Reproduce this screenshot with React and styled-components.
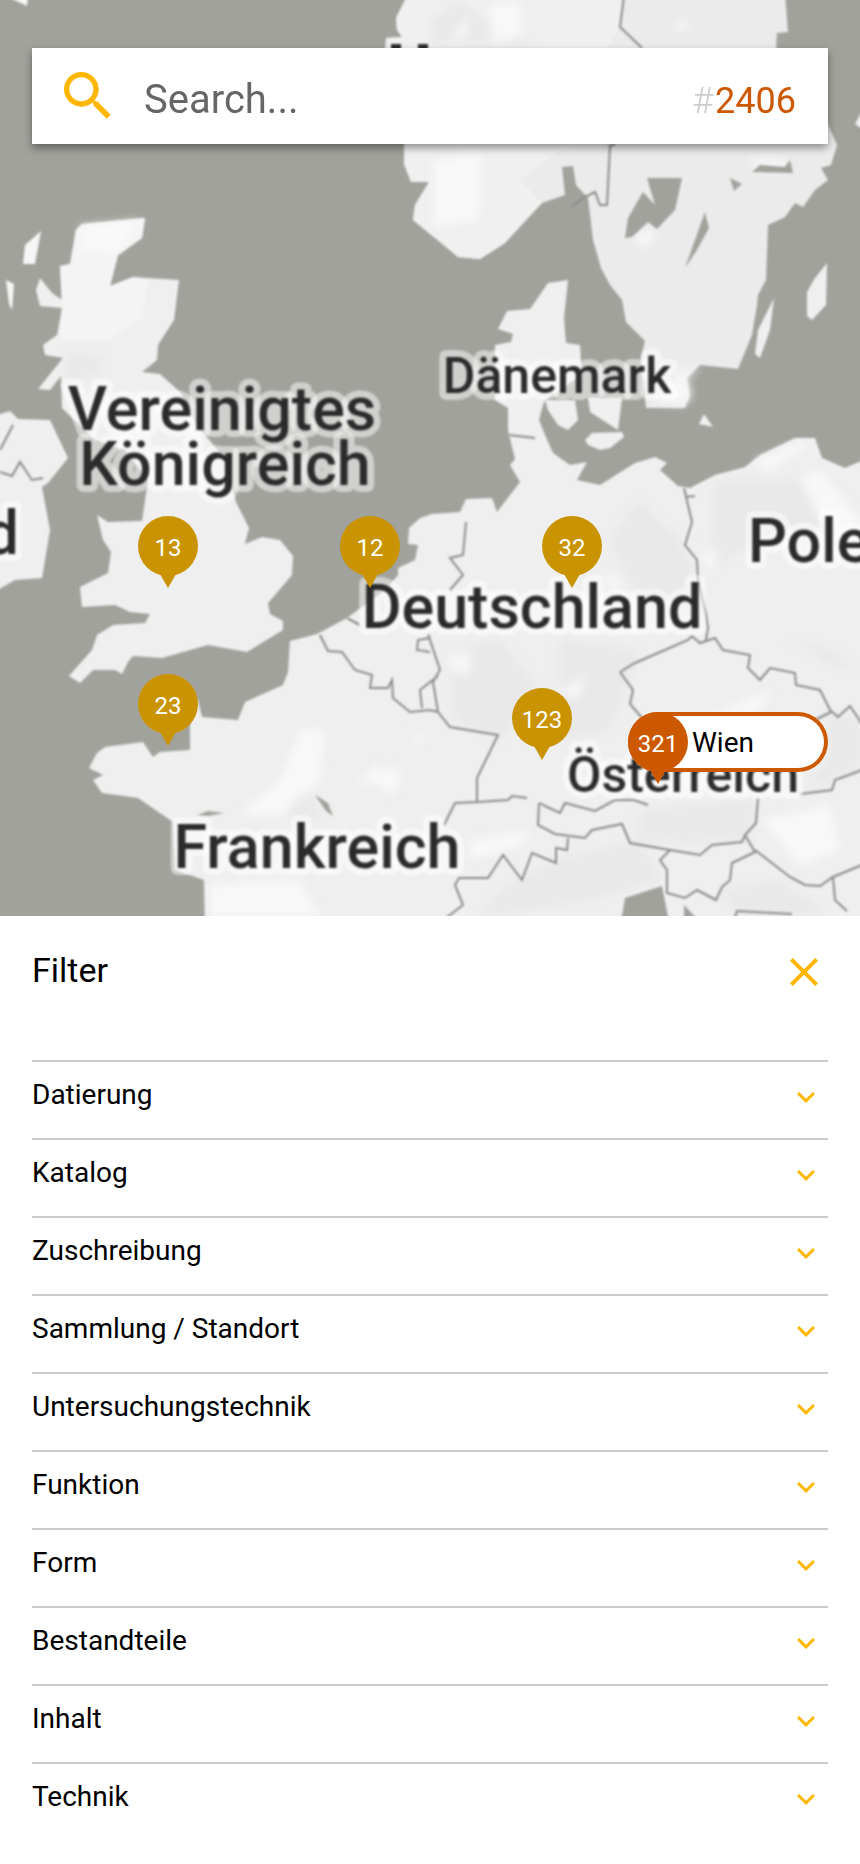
import React, { useState } from "react";
import styled, { createGlobalStyle, css } from "styled-components";

const color = {
  amber: "#ffb600",
  ochre: "#ca9302",
  orange: "#cc5800",
  sea: "#a1a29c",
  land: "#efefef",
  line: "#cccccc",
  label: "#2b2b2b",
};

const GlobalStyle = createGlobalStyle`
  *, *::before, *::after { box-sizing: border-box; }
  body {
    margin: 0;
    background: #fff;
    color: #000;
    font-family: Roboto, "Liberation Sans", sans-serif;
  }
`;

const Page = styled.main`
  padding-bottom: 24px;
`;

/* ---------- map ---------- */

const MapArea = styled.section`
  position: relative;
  aspect-ratio: 860 / 916;
  overflow: hidden;
  background: ${color.sea};
`;

const MapDrawing = styled.svg`
  display: block;
  width: 100%;
  height: 100%;
`;

const Terrain = styled.g`
  filter: blur(1px);
`;

const Relief = styled.g`
  filter: blur(4px);
`;

const MapLabel = styled.text`
  font-family: Roboto, "Liberation Sans", sans-serif;
  font-weight: 500;
  font-size: ${(p) => (p.$small ? 50 : 61)}px;
  text-anchor: ${(p) => p.$anchor || "middle"};
  fill: ${color.label};
  stroke: rgba(255, 255, 255, 0.5);
  stroke-width: 14px;
  stroke-linejoin: round;
  paint-order: stroke;
`;

const BORDERS = [
  "M624 -4L620 27L642 48M615 144L610 146L607 205L600 205L595 192L585 197L572 206",
  "M509 435L535 438M0 450L13 425M0 472L12 476L20 462L32 480L43 478",
  "M466 522L463 555L450 558L463 575L450 590",
  "M684 488L692 522L685 545L697 560L698 580L706 615L708 628L706 640",
  "M685 497L695 496",
  "M347 618L360 625M320 635L328 651L342 652L355 670L372 675L370 688L388 688L392 680L393 698L410 712L430 710",
  "M438 676L420 690L422 708M430 638L418 640L417 650L430 652",
  "M428 634L440 670L433 682L438 712L450 727L498 735L477 778L477 802L455 803L444 825M430 710L438 712",
  "M477 802L508 800L512 796L527 798",
  "M620 672L635 663L688 640L692 636L700 643L715 638L723 650L750 655L748 668L760 680L770 668L795 673L796 685L820 690L830 710L838 717L850 706L862 724",
  "M620 672L633 690L630 704L642 718L660 730M815 720L831 712",
  "M540 803L545 806L560 813L565 803L595 811L615 800L634 800L648 805",
  "M539 803L538 825L555 834L585 838L592 830L622 824L630 843L670 850L700 855L712 845L742 842L745 835L756 823L758 798",
  "M568 838L567 850L556 848L556 863L532 853L522 880L503 855L488 878L459 878L455 885L463 905L446 918",
  "M670 850L660 860L667 870L667 893L685 898L697 890L716 900L722 887L730 880L732 863L755 852L745 835",
  "M755 850L790 877L805 885L820 886L833 877L862 865M833 877L835 900L847 911",
  "M735 918L737 911L792 914M800 794L832 790L835 780L862 770",
];

const SHADE_DARK = [
  "M640 500L690 560L700 620L640 600L610 540Z",
  "M625 508L680 535L676 560Z",
  "M715 480L812 480L830 530L760 540L710 570Z",
  "M450 650L500 640L540 690L500 740L455 720Z",
  "M560 640L640 650L610 730L560 740Z",
  "M640 810L755 800L750 840L640 842Z",
  "M560 860L640 840L660 880L590 900L480 918L500 890Z",
  "M790 640L830 650L860 668L830 664Z",
  "M290 790L310 794L325 820L290 818Z",
  "M430 20L460 0L500 30L540 44L430 44Z",
  "M66 352L104 358L98 374L66 382Z",
  "M720 890L780 880L830 916L740 916Z",
  "M828 712L860 720L860 768L800 790L828 760Z",
];

const SHADE_LIGHT = [
  "M450 44L470 12L466 36Z",
  "M490 4L520 4L522 36L492 44Z",
  "M674 32L684 16L688 28Z",
  "M434 160L482 154L478 220L434 226Z",
  "M80 226L142 220L118 252L82 250Z",
  "M752 462L800 442L808 446L770 470Z",
  "M800 480L820 470L860 520L860 560L820 520Z",
  "M640 230L658 232L650 246L634 244Z",
  "M750 158L788 160L784 172L756 168Z",
  "M702 365L688 378L692 396L684 406L650 400L680 372Z",
  "M300 730L326 730L320 780L280 816L240 814L280 780Z",
  "M355 786L380 760L376 772L402 768L394 796L370 780Z",
  "M407 728L424 740L420 746Z",
  "M450 654L472 652L468 676L452 670Z",
  "M600 570L622 582L614 592Z",
  "M700 555L720 548L712 572Z",
  "M560 690L585 676L578 700Z",
  "M700 720L770 690L760 712Z",
  "M762 820L830 805L840 850L800 866Z",
  "M210 884L300 880L320 916L210 916Z",
  "M470 840L530 830L520 846L470 860Z",
];

function EuropeMap() {
  return (
    <MapDrawing viewBox="0 0 860 916" preserveAspectRatio="xMidYMid slice" role="img" aria-label="Karte von Mitteleuropa">
      <Terrain>
        <rect x="-20" y="-20" width="900" height="956" fill={color.sea} />
        {/* Scandinavia */}
        <path
          fill="#ebebeb"
          d="M408 -6L396 18L397 30L402 37L386 38L384 60L404 140L408 152L404 164L411 182L429 182L415 205L413 220L430 234L446 246L458 257L480 259L505 243L530 215L542 203L565 195L562 167L573 166L576 185L588 198L593 240L601 268L610 285L622 300L626 322L645 341L641 358L646 408L685 408L690 396L687 378L700 365L738 369L752 335L757 305L758 295L766 280L768 225L785 217L795 203L803 207L815 190L828 180L821 168L831 165L837 145L828 125L800 60L776 48L777 33L788 32L785 -6Z"
        />
        <path fill="#f0f0f0" d="M408 -6L396 18L397 30L402 37L386 38L404 140L404 164L411 182L429 182L415 205L413 220L458 257L480 259L505 243L542 203L520 180L560 150L606 146L600 60L620 27L624 -6Z" />
        {/* Danish mainland and continental Europe */}
        <path
          fill={color.land}
          d="M507 311L530 309L548 283L568 280L564 318L566 343L580 345L582 375L545 400L543 405L539 420L545 435L553 453L570 465L587 462L577 480L600 485L635 463L655 457L667 463L660 470L678 486L690 488L715 475L745 467L760 455L795 438L815 438L822 458L845 468L866 459L866 922L205 922L204 880L175 870L173 822L138 798L102 793L93 780L103 775L89 768L97 753L105 747L143 742L153 757L160 752L190 750L190 700L198 700L202 717L238 720L245 702L283 685L288 672L290 641L317 634L347 618L385 590L398 575L398 568L415 560L418 545L408 544L409 528L420 518L432 514L460 512L466 499L492 498L497 512L520 482L510 465L515 459L508 430L508 408L495 400L495 345L511 342L513 334L498 329Z"
        />
        {/* Danish islands and the Baltic */}
        <path
          fill={color.land}
          d="M545 400L575 400L578 420L568 430L558 425L548 410ZM588 398L622 398L618 430L590 412ZM585 440L592 433L622 432L624 437L610 448L600 450L588 445ZM704 414L713 427L699 424ZM774 298L770 330L760 358L755 354L758 330ZM827 263L826 305L812 320L807 316L807 292L815 278ZM864 108L855 124L864 130Z"
        />
        {/* Great Britain */}
        <path
          fill={color.land}
          d="M76 230L82 224L145 218L142 238L118 255L110 286L133 277L179 280L174 320L158 345L157 360L142 372L160 374L180 392L196 424L226 460L236 502L249 528L245 544L262 537L280 540L293 556L292 575L268 603L270 614L283 621L283 630L247 652L208 645L162 658L133 656L128 662L122 674L115 670L93 670L80 683L69 676L92 650L97 635L113 625L145 623L150 614L130 612L115 605L82 607L80 587L108 573L111 552L103 540L97 515L108 522L142 521L148 480L125 450L95 440L62 408L61 376L50 390L38 389L63 358L45 355L43 345L57 335L62 308L40 306L36 290L40 278L52 293L62 300L60 266L70 264Z"
        />
        <path fill="#f4f4f4" d="M76 230L82 224L145 218L142 238L118 255L110 286L133 277L148 280L142 318L110 340L60 340L62 308L60 266L70 264Z" />
        <path fill="#f6f6f6" d="M41 231L35 264L23 264L25 245ZM6 280L14 284L12 310L9 304ZM6 -4L28 -4L27 6Z" />
        {/* Ireland */}
        <path fill={color.land} d="M-6 416L10 411L18 419L50 420L68 458L48 483L42 487L50 530L42 578L15 580L-6 592Z" />
      </Terrain>
      <Relief>
        {SHADE_DARK.map((d) => (
          <path key={d} d={d} fill="#e7e7e7" opacity="0.8" />
        ))}
        {SHADE_LIGHT.map((d) => (
          <path key={d} d={d} fill="#fafafa" opacity="0.8" />
        ))}
      </Relief>
      <Terrain>
        {/* Lakes and inlets */}
        <path
          fill={color.sea}
          d="M647 178L682 178L675 210L657 229L648 222L632 237L625 238L628 218L643 192L655 205ZM705 212L709 228L697 250L685 268ZM752 172L760 165L785 167L790 160L793 173ZM730 178L742 184L734 191ZM625 898L662 886L669 922L621 922ZM684 905L700 922L684 922ZM197 815L208 811L224 813L208 816ZM315 795L328 803L333 816L326 811Z"
        />
        <path fill={color.label} d="M391 44h10v10h-10ZM418 44h10v10h-10Z" />
        <path d={BORDERS.join("")} fill="none" stroke="#8b8b88" strokeWidth="2" />
      </Terrain>
      <Terrain>
        <MapLabel $small x="557" y="393">Dänemark</MapLabel>
        <MapLabel x="222" y="430">Vereinigtes</MapLabel>
        <MapLabel x="225" y="485">Königreich</MapLabel>
        <MapLabel x="19" y="554" $anchor="end">Irland</MapLabel>
        <MapLabel x="748" y="562" $anchor="start">Polen</MapLabel>
        <MapLabel x="532" y="628">Deutschland</MapLabel>
        <MapLabel $small x="683" y="792">Österreich</MapLabel>
        <MapLabel x="317" y="868">Frankreich</MapLabel>
      </Terrain>
    </MapDrawing>
  );
}

const SearchBar = styled.form`
  position: absolute;
  top: 48px;
  left: 32px;
  right: 32px;
  display: flex;
  align-items: center;
  gap: 24px;
  height: 96px;
  padding: 0 32px 0 24px;
  background: #fff;
  box-shadow: 0 4px 8px rgba(0, 0, 0, 0.4);
`;

const SearchIcon = styled.svg`
  flex: none;
  width: 64px;
  height: 64px;
  fill: ${color.amber};
`;

const SearchFields = styled.div`
  flex: 1;
  min-width: 0;
  display: flex;
  align-items: baseline;
  padding-top: 8px;
`;

const SearchInput = styled.input`
  flex: 1;
  min-width: 0;
  padding: 0;
  border: 0;
  outline: 0;
  background: none;
  color: #000;
  font: inherit;
  font-size: 40px;
  line-height: 48px;

  &::placeholder {
    color: #666;
    opacity: 1;
  }
`;

const HitCount = styled.output`
  color: ${color.orange};
  font-size: 36px;
  line-height: 48px;
`;

const HashSign = styled.span`
  padding-right: 2px;
  color: ${color.line};
  font-weight: 300;
`;

const Pin = styled.button`
  position: absolute;
  left: ${(p) => `calc(100% * ${p.$x} / 860)`};
  top: ${(p) => `calc(100% * ${p.$y} / 916)`};
  display: flex;
  align-items: center;
  height: 60px;
  padding: 0;
  border: 0;
  border-radius: 30px;
  background: none;
  color: #000;
  font: inherit;
  font-size: 28px;
  cursor: pointer;

  ${(p) =>
    p.$open &&
    css`
      width: 200px;
      gap: 4px;
      background: #fff;
      box-shadow: inset 0 0 0 4px ${color.orange};
    `}
`;

const PinCount = styled.span`
  position: relative;
  display: grid;
  place-items: center;
  width: 60px;
  height: 60px;
  padding-top: 4px;
  border-radius: 50%;
  background: ${(p) => (p.$open ? color.orange : color.ochre)};
  color: #fff;
  font-size: 24px;
  font-weight: 400;

  &::after {
    content: "";
    position: absolute;
    top: 58px;
    left: 22px;
    border: solid transparent;
    border-width: 14px 8px 0;
    border-top-color: ${(p) => (p.$open ? color.orange : color.ochre)};
  }
`;

const PINS = [
  { x: 138, y: 516, count: 13 },
  { x: 340, y: 516, count: 12 },
  { x: 542, y: 516, count: 32 },
  { x: 138, y: 674, count: 23 },
  { x: 512, y: 688, count: 123 },
  { x: 628, y: 712, count: 321, place: "Wien" },
];

/* ---------- filter ---------- */

const FilterPanel = styled.section`
  padding: 32px 32px 0;
`;

const FilterHeader = styled.header`
  display: flex;
  align-items: flex-start;
  justify-content: space-between;
  padding-bottom: 64px;
`;

const FilterTitle = styled.h2`
  margin: 0;
  font-size: 34px;
  font-weight: 400;
  line-height: 44px;
`;

const CloseButton = styled.button`
  width: 48px;
  height: 48px;
  padding: 0;
  border: 0;
  background: none;
  cursor: pointer;
`;

const CloseIcon = styled.svg`
  display: block;
  width: 48px;
  height: 48px;
  fill: ${color.amber};
`;

const FilterList = styled.ul`
  margin: 0;
  padding: 0;
  list-style: none;
`;

const FilterItem = styled.li`
  border-top: 2px solid ${color.line};
`;

const FilterToggle = styled.button`
  display: flex;
  align-items: center;
  justify-content: space-between;
  width: 100%;
  height: 76px;
  padding: 0 4px 12px 0;
  border: 0;
  background: none;
  color: #000;
  font: inherit;
  font-size: 28px;
  text-align: left;
  cursor: pointer;
`;

const Chevron = styled.svg`
  flex: none;
  width: 36px;
  height: 36px;
  margin-top: 6px;
  fill: ${color.amber};
  transform: ${(p) => (p.$open ? "rotate(180deg)" : "none")};
`;

const FILTERS = [
  "Datierung",
  "Katalog",
  "Zuschreibung",
  "Sammlung / Standort",
  "Untersuchungstechnik",
  "Funktion",
  "Form",
  "Bestandteile",
  "Inhalt",
  "Technik",
];

export default function App() {
  const [openFilter, setOpenFilter] = useState(null);

  return (
    <>
      <GlobalStyle />
      <Page>
        <MapArea>
          <EuropeMap />
          {PINS.map((pin) => (
            <Pin key={pin.count} type="button" $x={pin.x} $y={pin.y} $open={Boolean(pin.place)}>
              <PinCount $open={Boolean(pin.place)}>{pin.count}</PinCount>
              {pin.place}
            </Pin>
          ))}
          <SearchBar role="search" onSubmit={(e) => e.preventDefault()}>
            <SearchIcon viewBox="0 0 24 24" aria-hidden="true">
              <path d="M15.5 14h-.79l-.28-.27C15.41 12.59 16 11.11 16 9.5 16 5.91 13.09 3 9.5 3S3 5.91 3 9.5 5.91 16 9.5 16c1.61 0 3.09-.59 4.23-1.57l.27.28v.79l5 4.99L20.49 19l-4.99-5zm-6 0C7.01 14 5 11.99 5 9.5S7.01 5 9.5 5 14 7.01 14 9.5 11.99 14 9.5 14z" />
            </SearchIcon>
            <SearchFields>
              <SearchInput id="search" type="text" aria-label="Search" placeholder="Search..." />
              <HitCount htmlFor="search">
                <HashSign>#</HashSign>2406
              </HitCount>
            </SearchFields>
          </SearchBar>
        </MapArea>
        <FilterPanel>
          <FilterHeader>
            <FilterTitle>Filter</FilterTitle>
            <CloseButton type="button" aria-label="Filter schließen">
              <CloseIcon viewBox="0 0 24 24" aria-hidden="true">
                <path d="M19 6.41L17.59 5 12 10.59 6.41 5 5 6.41 10.59 12 5 17.59 6.41 19 12 13.41 17.59 19 19 17.59 13.41 12z" />
              </CloseIcon>
            </CloseButton>
          </FilterHeader>
          <FilterList>
            {FILTERS.map((name) => {
              const open = openFilter === name;
              return (
                <FilterItem key={name}>
                  <FilterToggle type="button" aria-expanded={open} onClick={() => setOpenFilter(open ? null : name)}>
                    {name}
                    <Chevron viewBox="0 0 24 24" aria-hidden="true" $open={open}>
                      <path d="M16.59 8.59L12 13.17 7.41 8.59 6 10l6 6 6-6z" />
                    </Chevron>
                  </FilterToggle>
                </FilterItem>
              );
            })}
          </FilterList>
        </FilterPanel>
      </Page>
    </>
  );
}
